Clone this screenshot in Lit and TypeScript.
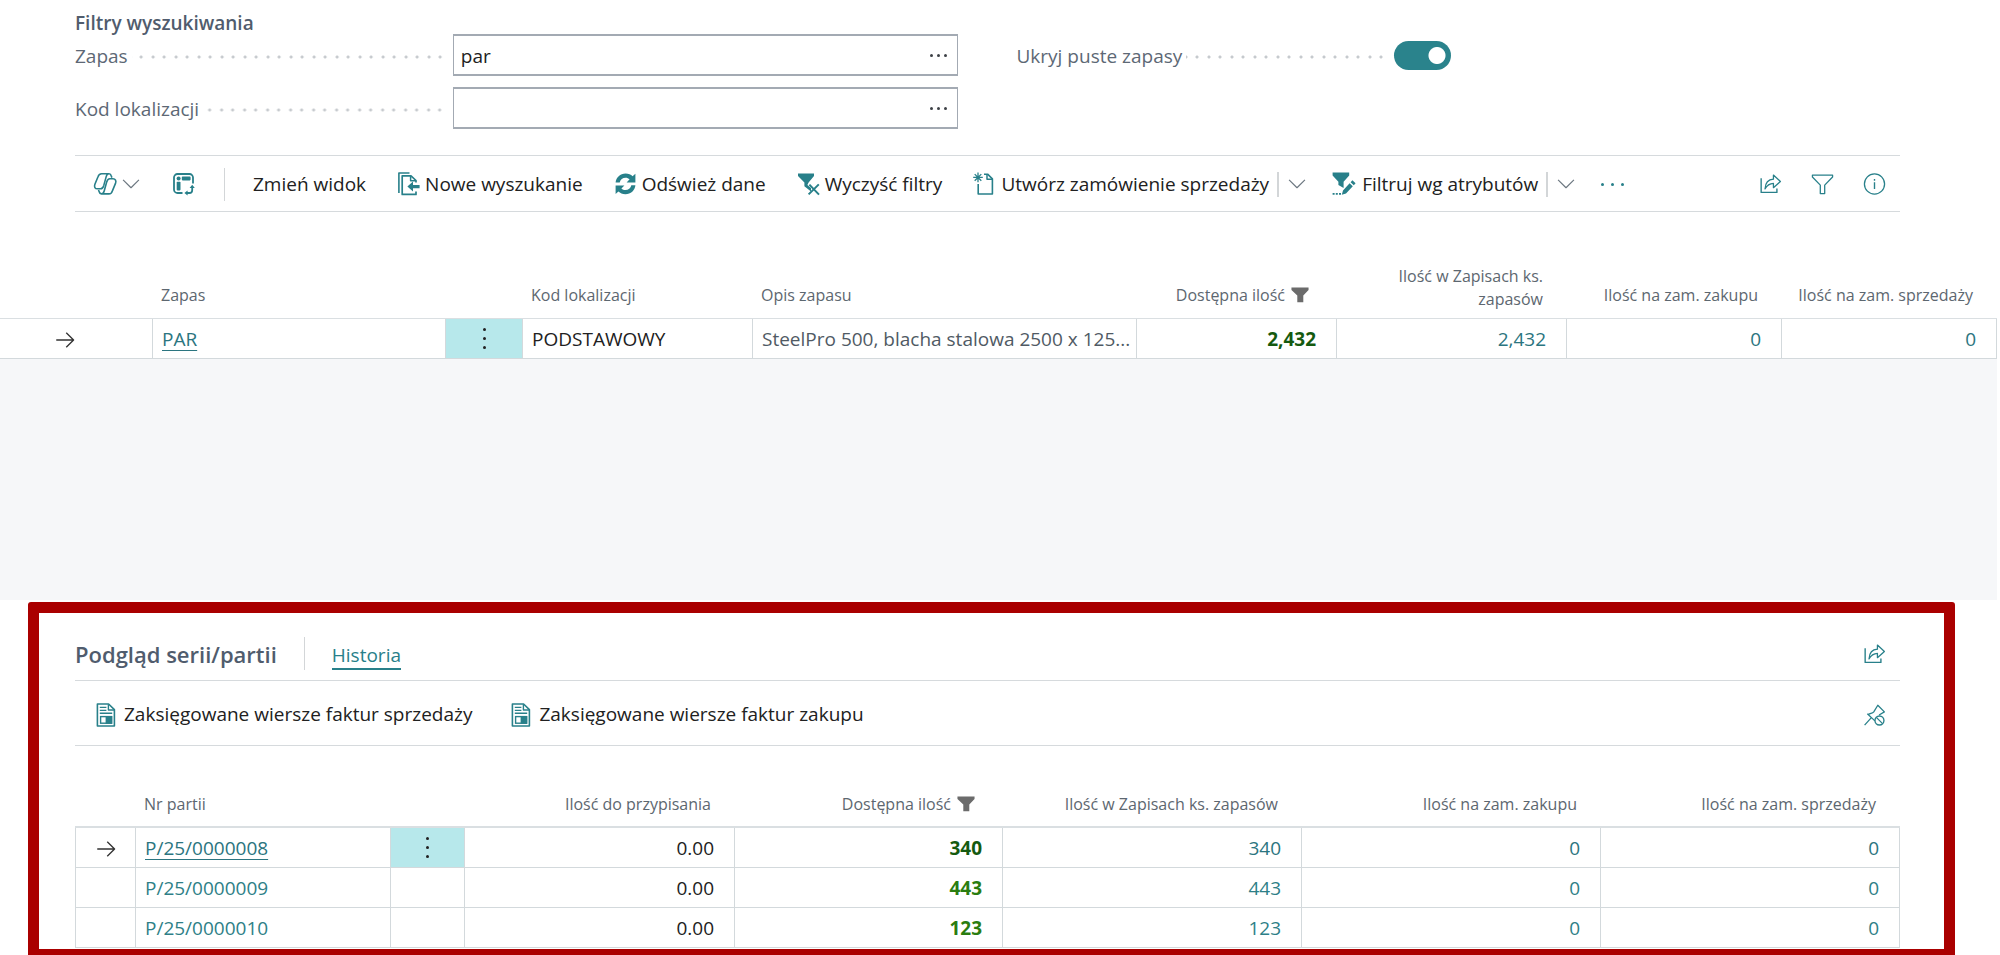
import { LitElement, html, css, svg, nothing } from "lit";
import { customElement, property, state } from "lit/decorators.js";
import { classMap } from "lit/directives/class-map.js";

const strokes = (d: string, w = 1.4) =>
  svg`<path d=${d} fill="none" stroke="currentColor" stroke-width=${w} stroke-linejoin="round" />`;
const solid = (d: string) => svg`<path d=${d} fill="currentColor" />`;

const lobe =
  "M16 1.7H8.6C6.4 1.7 5.5 2.8 4.9 5L1.9 12.2C0.9 15 2 16.8 4.4 16.8H7.6C9.6 16.8 10.2 15.4 10.8 13.4L13.2 4.6C13.7 2.8 14.3 1.7 16 1.7C17.3 1.7 17.9 2.6 18.2 3.8L18.9 5.6";

const ICONS: Record<string, unknown> = {
  copilot: svg`${strokes(lobe, 1.6)}<g transform="rotate(180 12.2 11.8)">${strokes(lobe, 1.6)}</g>`,
  analyze: svg`
    ${strokes("M21 11.5V5.5A3.5 3.5 0 0 0 17.5 2H5.5A3.5 3.5 0 0 0 2 5.5V17.5A3.5 3.5 0 0 0 5.5 21H10.5", 1.8)}
    <circle cx="6.6" cy="6.5" r="2" fill="currentColor" />
    <rect x="9.8" y="4.6" width="8.8" height="3.8" rx="0.8" fill="currentColor" />
    <rect x="4.7" y="9.8" width="3.8" height="8.6" rx="0.8" fill="currentColor" />
    ${strokes("M14 21H17.4A2.8 2.8 0 0 0 20.2 18.2V14.5", 1.8)}
    ${solid("M15.6 18.4V23.6L12.4 21ZM17.6 16H22.8L20.2 12.8Z")}`,
  newSearch: svg`
    ${strokes("M1.9 21V1H12.5", 1.6)}
    ${strokes("M19 10.5V8.5L14 3.8H5.2V22.4H19V19.5", 1.7)}
    ${strokes("M13.6 4V8.8H19", 1.5)}
    ${solid("M10.4 14.6L16 9.6V12.9H22.6V16.3H16V19.6Z")}`,
  refresh: svg`
    ${solid("M1.6 10.6C2 5.6 6.2 1.6 11.6 1.6C14.6 1.6 16.8 2.6 18.6 4.2L21.4 1.8V10.4H12.6L15.6 7.3C14.4 6.2 13.2 5.7 11.6 5.7C8.6 5.7 6.3 7.6 5.7 10.6Z")}
    ${solid("M21.4 13.2C21 18.2 16.8 22.2 11.4 22.2C8.4 22.2 6.2 21.2 4.4 19.6L1.6 22V13.4H10.4L7.4 16.5C8.6 17.6 9.8 18.1 11.4 18.1C14.4 18.1 16.7 16.2 17.3 13.2Z")}`,
  clearFilter: svg`
    ${solid("M1 1.4H17V4L11.6 10.6L10.4 13L14 16V19.4L7.4 14.2V10.6L1 4Z")}
    ${strokes("M12.4 12.6L22 22.6M21.8 12.4L11.6 22.4", 2)}`,
  newDoc: svg`
    ${strokes("M5.2 12V22H19.4V6.8L14.6 2.2H11", 1.6)}
    ${strokes("M14 2.4V7.2H19.2", 1.5)}
    ${strokes("M5 0.6V10.2M0.2 5.4H9.8M1.7 2.1L8.3 8.7M8.3 2.1L1.7 8.7", 1.3)}`,
  editFilter: svg`
    ${solid("M0.6 0.6H17.2V3.4L11.6 9.8V16L6.4 13V9.8L0.6 3.4Z")}
    ${solid("M20.4 8.2L23.6 11.2L21.8 13.2L18.6 10.2ZM17.6 11.2L20.8 14.2L14 21.4L9.8 22.8L11 18.4Z")}
    ${strokes("M0.6 21.8H2.6M3.8 21.8H5.8M7 21.8H9", 1.8)}`,
  chevron: strokes("M2.5 7L12 16.5L21.5 7", 1.4),
  share: svg`${strokes("M1.8 5.8V21.2H19V17", 1.5)}
    ${strokes("M6 17.4C6.4 10.8 9.6 7 15.2 6.8V2.2L22.8 9.2L15.2 16V11.4C11 11.6 8.2 13.4 6 17.4Z")}`,
  funnel: strokes("M1 2.2H23V4.4L14.4 13.2V22.4H9.6V13.2L1 4.4Z", 1.4),
  info: svg`<circle cx="12" cy="12" r="11" fill="none" stroke="currentColor" stroke-width="1.4" />
    ${strokes("M12 10V17.4M12 6.6V8.4", 1.5)}`,
  invoice: svg`
    ${strokes("M3.4 1H14.6L20.4 6.6V23H3.4Z", 1.6)}
    ${strokes("M14.4 1.2V7H20.2", 1.4)}
    ${strokes("M5.8 4.4H12.4M5.8 7.4H12.4M5.8 10.2H18.2", 1.4)}
    <rect x="6.6" y="13.6" width="11" height="6.6" fill="none" stroke="currentColor" stroke-width="1.4" />
    ${solid("M11.6 13H18.2V20.8H11.6Z")}`,
  unpin: svg`
    ${strokes("M1.2 23L8.6 14.8M4.2 10.6L12.4 18.4M5.2 11.4C8 10 9.8 10.2 11.2 8.6L15.6 1.4L22.8 8.6L17 12", 1.4)}
    <circle cx="17.4" cy="18" r="4.9" fill="none" stroke="currentColor" stroke-width="1.5" />
    ${strokes("M14 14.6L20.8 21.4", 1.4)}`,
  filterMark: solid("M0.6 2H23.4V5.4L16.4 12.6V21.6H8.4V12.6L0.6 5.4Z"),
  arrow: strokes("M1.5 12H22M13.5 3.2L22.3 12L13.5 20.8", 1.6),
};

@customElement("bc-icon")
class BcIcon extends LitElement {
  @property() name = "";
  static styles = css`
    :host { display: inline-block; flex: none; width: 24px; height: 24px; }
    svg { display: block; width: 100%; height: 100%; overflow: visible; }
  `;
  render() {
    return html`<svg viewBox="0 0 24 24" aria-hidden="true">${ICONS[this.name]}</svg>`;
  }
}

type Column = {
  label: string;
  width: number;
  kind: "marker" | "link" | "menu" | "text" | "plain" | "amount" | "strong" | "drill";
  filtered?: boolean;
  wrap?: boolean;
};

@customElement("bc-grid")
class BcGrid extends LitElement {
  @property({ attribute: false }) columns: Column[] = [];
  @property({ attribute: false }) rows: string[][] = [];
  @property() label = "";
  @state() private current = 0;

  static styles = css`
    :host { display: block; }
    * { box-sizing: border-box; }
    table {
      width: 100%;
      table-layout: fixed;
      border-collapse: separate;
      border-spacing: 0;
      font-size: 19px;
      line-height: 24px;
    }
    th {
      padding: var(--head-space, 43px) 24px var(--head-gap, 6px) 8px;
      border-bottom: var(--head-line, 2px) solid #dadfe2;
      vertical-align: bottom;
      text-align: left;
      font-size: 16px;
      line-height: 31px;
      font-weight: 400;
      color: #5d6770;
      white-space: nowrap;
    }
    th.wrap { line-height: 23px; white-space: normal; padding-left: 40px; }
    td {
      height: 40px;
      padding: 0 20px 0 9px;
      border-right: 1px solid #d3d9dc;
      border-bottom: 1px solid #d3d9dc;
      background: #fff;
      color: #212121;
      white-space: nowrap;
    }
    td:first-child { border-left: var(--side-line, 1px) solid #d3d9dc; }
    .right { text-align: right; }
    td.mark { text-align: center; padding: 0 var(--mark-space, 0px) 0 0; color: #333; }
    .mark bc-icon { width: 20px; height: 20px; vertical-align: middle; }
    .strong { font-weight: 700; color: #2a7d10; }
    .current .strong { color: #155a10; }
    .plain { color: #505a64; padding-right: 0; }
    a { color: #2e7f87; text-decoration: none; }
    .current a { color: #2b7580; }
    .current .key { text-decoration: underline; text-decoration-thickness: 1px; text-underline-offset: 4px; }
    .menu { padding: 0; text-align: center; }
    .current .menu { background: #b7e8eb; }
    button {
      display: inline-flex;
      flex-direction: column;
      align-items: center;
      gap: 6px;
      padding: 4px 12px;
      border: 0;
      background: none;
      vertical-align: middle;
      cursor: pointer;
    }
    .dot { width: 3px; height: 3px; border-radius: 50%; background: #212121; }
    .flag { width: 18px; height: 18px; margin: 0 4px 0 6px; color: #6b6b6b; vertical-align: -3px; }
  `;

  private cell(c: Column, v: string, on: boolean) {
    switch (c.kind) {
      case "marker":
        return html`<td class="mark">${on ? html`<bc-icon name="arrow"></bc-icon>` : nothing}</td>`;
      case "menu":
        return html`<td class="menu">${on
          ? html`<button aria-label="Więcej opcji"><span class="dot"></span><span class="dot"></span><span class="dot"></span></button>`
          : nothing}</td>`;
      case "link":
        return html`<td><a class="key" href="#">${v}</a></td>`;
      case "drill":
        return html`<td class="right"><a href="#">${v}</a></td>`;
      case "strong":
        return html`<td class="right strong">${v}</td>`;
      case "amount":
        return html`<td class="right">${v}</td>`;
      default:
        return html`<td class=${c.kind}>${v}</td>`;
    }
  }

  render() {
    return html`
      <table aria-label=${this.label}>
        <colgroup>${this.columns.map((c) => html`<col style="width:${c.width}px" />`)}</colgroup>
        <thead>
          <tr>
            ${this.columns.map((c) => html`
              <th scope="col" class=${classMap({
                right: ["amount", "strong", "drill"].includes(c.kind),
                wrap: !!c.wrap,
              })}>${c.label}${c.filtered ? html`<bc-icon class="flag" name="filterMark"></bc-icon>` : nothing}</th>`)}
          </tr>
        </thead>
        <tbody>
          ${this.rows.map((r, i) => html`
            <tr class=${classMap({ current: i === this.current })} @click=${() => (this.current = i)}>
              ${this.columns.map((c, k) => this.cell(c, r[k], i === this.current))}
            </tr>`)}
        </tbody>
      </table>`;
  }
}

const ITEM_COLUMNS: Column[] = [
  { label: "", width: 153, kind: "marker" },
  { label: "Zapas", width: 293, kind: "link" },
  { label: "", width: 77, kind: "menu" },
  { label: "Kod lokalizacji", width: 230, kind: "text" },
  { label: "Opis zapasu", width: 384, kind: "plain" },
  { label: "Dostępna ilość", width: 200, kind: "strong", filtered: true },
  { label: "Ilość w Zapisach ks. zapasów", width: 230, kind: "drill", wrap: true },
  { label: "Ilość na zam. zakupu", width: 215, kind: "drill" },
  { label: "Ilość na zam. sprzedaży", width: 215, kind: "drill" },
];
const ITEM_ROWS = [
  ["", "PAR", "", "PODSTAWOWY", "SteelPro 500, blacha stalowa 2500 x 125...", "2,432", "2,432", "0", "0"],
];

const LOT_COLUMNS: Column[] = [
  { label: "", width: 61, kind: "marker" },
  { label: "Nr partii", width: 255, kind: "link" },
  { label: "", width: 74, kind: "menu" },
  { label: "Ilość do przypisania", width: 270, kind: "amount" },
  { label: "Dostępna ilość", width: 268, kind: "strong", filtered: true },
  { label: "Ilość w Zapisach ks. zapasów", width: 299, kind: "drill" },
  { label: "Ilość na zam. zakupu", width: 299, kind: "drill" },
  { label: "Ilość na zam. sprzedaży", width: 299, kind: "drill" },
];
const LOT_ROWS = [
  ["", "P/25/0000008", "", "0.00", "340", "340", "0", "0"],
  ["", "P/25/0000009", "", "0.00", "443", "443", "0", "0"],
  ["", "P/25/0000010", "", "0.00", "123", "123", "0", "0"],
];

@customElement("app-root")
class AppRoot extends LitElement {
  static styles = css`
    :host {
      display: block;
      background: #fff;
      font-family: "Open Sans", "Noto Sans", sans-serif;
      font-size: 19px;
      line-height: 23px;
      color: #212121;
    }
    * { box-sizing: border-box; }
    button, input { font: inherit; color: inherit; }
    button { display: inline-flex; align-items: center; padding: 0; border: 0; background: none; cursor: pointer; }
    h1, h2 { margin: 0; color: #505c6d; font-weight: 600; }
    .filters { padding: 12px 100px 26px 75px; }
    .filters h1 { font-size: 19px; line-height: 22px; }
    .fields { display: grid; grid-template-columns: 1fr 1fr; gap: 11px 58px; }
    .field { display: grid; grid-template-columns: 8fr 11fr; gap: 10px; align-items: center; height: 42px; grid-column: 1; }
    .field.second { grid-column: 2; grid-row: 1; }
    .field label { display: flex; gap: 4px; color: #5d6875; white-space: nowrap; padding-top: 2px; }
    .leader {
      flex: 1;
      background-image:
        radial-gradient(circle at 9px 12px, #c6cace 1px, transparent 2px),
        radial-gradient(circle at 20px 12px, #c6cace 1px, transparent 2px);
      background-size: 23px 100%;
      background-position: right top;
    }
    .box { display: flex; align-items: center; height: 42px; border: 1px solid #a3aab3; border-width: 2px 1px; }
    .box input { flex: 1; min-width: 0; height: 100%; padding: 2px 0 0 7px; border: 0; outline: 0; background: none; }
    .more { gap: 4px; padding: 10px; color: #3d4146; }
    .more i { width: 3px; height: 3px; border-radius: 50%; background: currentColor; }
    .switch {
      appearance: none;
      width: 57px;
      height: 29px;
      margin: 0;
      border-radius: 15px;
      background: radial-gradient(circle at 43px 50%, #fff 8px, #2a838c 9px);
    }
    .bar {
      display: flex;
      align-items: center;
      gap: 31px;
      height: 57px;
      margin: 0 100px 0 75px;
      padding: 1px 14px 0 18px;
      border: 1px solid #d6dadd;
      border-width: 1px 0;
    }
    .bar bc-icon, .title-row bc-icon { color: #28808a; }
    .act { gap: 4px; white-space: nowrap; }
    .act.near { gap: 6px; }
    .split { display: inline-flex; align-items: center; gap: 8px; margin-right: -6px; }
    .bar .open { width: 20px; height: 20px; color: #6c7780; }
    .rule { width: 1px; height: 33px; background: #d3d6d8; }
    .bar > .rule { margin: 0 -3px; }
    .split .rule { height: 25px; width: 2px; }
    .tail { display: flex; align-items: center; gap: 29px; margin-left: auto; }
    .tail bc-icon { width: 23px; height: 22px; }
    .dots { color: #28808a; padding: 0; gap: 7px; }
    .items { margin-right: 3px; --head-space: 53px; --head-gap: 7px; --head-line: 1px; --side-line: 0px; --mark-space: 22px; }
    .blank { height: 241px; background: #f6f7f9; margin: 0 3px 2px 0; }
    .lots {
      margin: 0 45px 0 28px;
      padding: 0 44px 1px 36px;
      border: 11px solid #aa0000;
      border-bottom-width: 6px;
      border-radius: 3px 3px 0 0;
    }
    .title-row { display: flex; align-items: center; gap: 27px; padding: 24px 14px 10px 0; border-bottom: 1px solid #d6dadd; }
    .title-row h2 { font-size: 22px; line-height: 30px; }
    .tab { line-height: 26px; margin-top: 4px; border-bottom: 2px solid #28808a; color: #28808a; text-decoration: none; }
    .lots .bar { height: 65px; margin: 0; padding: 3px 14px 0 19px; gap: 37px; border-top: 0; }
    .lots .act { gap: 6px; }
  `;

  private dots(cls = "") {
    return html`<button class="more ${cls}" aria-label="Więcej"><i></i><i></i><i></i></button>`;
  }

  private icon(name: string, label: string) {
    return html`<button aria-label=${label}><bc-icon name=${name}></bc-icon></button>`;
  }

  render() {
    return html`
      <section class="filters">
        <h1>Filtry wyszukiwania</h1>
        <div class="fields">
          <div class="field">
            <label for="item">Zapas<span class="leader"></span></label>
            <div class="box"><input id="item" type="text" value="par" />${this.dots()}</div>
          </div>
          <div class="field">
            <label for="location">Kod lokalizacji<span class="leader"></span></label>
            <div class="box"><input id="location" type="text" />${this.dots()}</div>
          </div>
          <div class="field second">
            <label for="hide">Ukryj puste zapasy<span class="leader"></span></label>
            <input id="hide" class="switch" type="checkbox" role="switch" checked />
          </div>
        </div>
      </section>

      <nav class="bar">
        <button class="act" aria-label="Copilot"><bc-icon name="copilot"></bc-icon><bc-icon class="open" name="chevron"></bc-icon></button>
        ${this.icon("analyze", "Analiza")}
        <span class="rule"></span>
        <button class="act">Zmień widok</button>
        <button class="act"><bc-icon name="newSearch"></bc-icon>Nowe wyszukanie</button>
        <button class="act"><bc-icon name="refresh"></bc-icon>Odśwież dane</button>
        <button class="act"><bc-icon name="clearFilter"></bc-icon>Wyczyść filtry</button>
        <span class="split">
          <button class="act"><bc-icon name="newDoc"></bc-icon>Utwórz zamówienie sprzedaży</button>
          <span class="rule"></span>
          <button aria-label="Rozwiń"><bc-icon class="open" name="chevron"></bc-icon></button>
        </span>
        <span class="split">
          <button class="act near"><bc-icon name="editFilter"></bc-icon>Filtruj wg atrybutów</button>
          <span class="rule"></span>
          <button aria-label="Rozwiń"><bc-icon class="open" name="chevron"></bc-icon></button>
        </span>
        ${this.dots("dots")}
        <span class="tail">
          ${this.icon("share", "Udostępnij")}${this.icon("funnel", "Filtr")}${this.icon("info", "Informacje")}
        </span>
      </nav>

      <bc-grid class="items" label="Zapasy" .columns=${ITEM_COLUMNS} .rows=${ITEM_ROWS}></bc-grid>
      <div class="blank"></div>

      <section class="lots">
        <header class="title-row">
          <h2>Podgląd serii/partii</h2>
          <span class="rule"></span>
          <a class="tab" href="#">Historia</a>
          <span class="tail">${this.icon("share", "Udostępnij")}</span>
        </header>
        <nav class="bar">
          <button class="act"><bc-icon name="invoice"></bc-icon>Zaksięgowane wiersze faktur sprzedaży</button>
          <button class="act"><bc-icon name="invoice"></bc-icon>Zaksięgowane wiersze faktur zakupu</button>
          <span class="tail">${this.icon("unpin", "Odepnij")}</span>
        </nav>
        <bc-grid label="Partie" .columns=${LOT_COLUMNS} .rows=${LOT_ROWS}></bc-grid>
      </section>
    `;
  }
}
